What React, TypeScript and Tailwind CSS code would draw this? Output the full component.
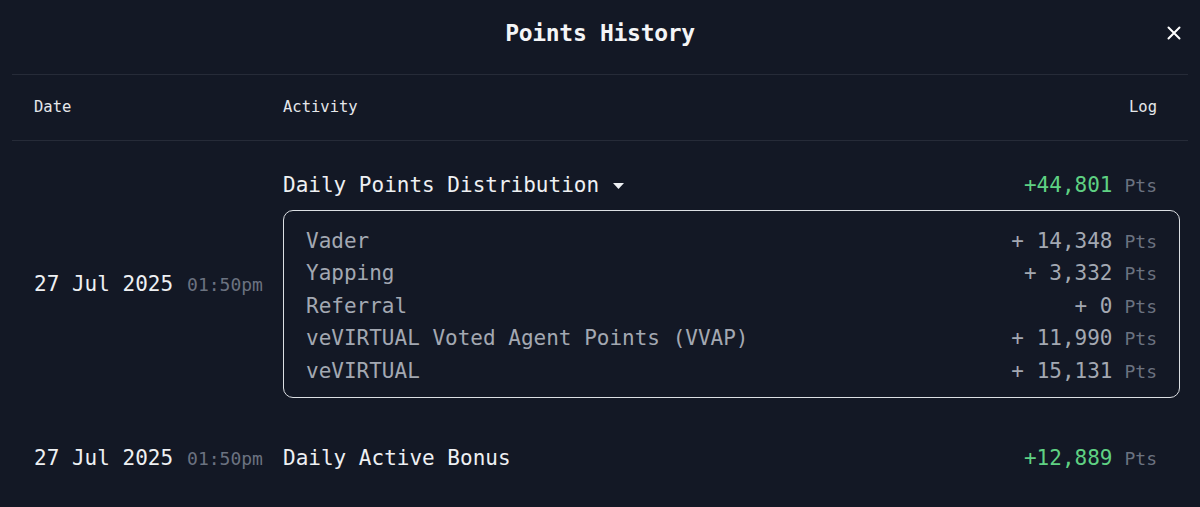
import React from "react";

const breakdown = [
  { label: "Vader", value: "14,348" },
  { label: "Yapping", value: "3,332" },
  { label: "Referral", value: "0" },
  { label: "veVIRTUAL Voted Agent Points (VVAP)", value: "11,990" },
  { label: "veVIRTUAL", value: "15,131" },
];

const DateCell = () => (
  <div className="w-[249px] shrink-0 flex items-baseline gap-[14px] whitespace-nowrap">
    <span className="text-[21px] text-[#eef0f3]">27 Jul 2025</span>
    <span className="text-[18px] text-[#6b7280]">01:50pm</span>
  </div>
);

const Total = ({ value }: { value: string }) => (
  <div className="flex items-baseline gap-[12px] whitespace-nowrap">
    <span className="text-[21px] text-[#5fd183]">{value}</span>
    <span className="text-[18px] text-[#6b7280]">Pts</span>
  </div>
);

const App = () => {
  return (
    <div
      className="w-[1200px] h-[507px] bg-[#131825] text-white overflow-hidden"
      style={{ fontFamily: '"DejaVu Sans Mono", "Liberation Mono", monospace' }}
    >
      <div className="relative h-[74px] flex items-center justify-center pb-[8px]">
        <h2 className="text-[23px] font-bold text-[#f4f5f7] tracking-[-0.3px]">
          Points History
        </h2>
        <button className="absolute right-[19px] top-[26px] text-white">
          <svg width="14" height="14" viewBox="0 0 14 14" fill="none">
            <path
              d="M1.5 1.5L12.5 12.5M12.5 1.5L1.5 12.5"
              stroke="currentColor"
              strokeWidth="2"
              strokeLinecap="round"
            />
          </svg>
        </button>
      </div>

      <div className="mx-[12px]">
        <div className="border-t border-[#262b38] h-[66px] flex items-center pl-[22px] pr-[31px] text-[15.5px] text-[#e5e7eb]">
          <div className="w-[249px] shrink-0">Date</div>
          <div className="flex-1">Activity</div>
          <div>Log</div>
        </div>

        <div className="border-t border-[#262b38] pt-[30px] pl-[22px] pr-[8px]">
          <div className="flex items-center">
            <DateCell />
            <div className="flex-1">
              <div className="flex items-center justify-between pr-[23px] h-[30px]">
                <div className="flex items-center gap-[14px] text-[21px] text-[#eef0f3]">
                  <span>Daily Points Distribution</span>
                  <svg width="11" height="6" viewBox="0 0 11 6">
                    <path d="M0 0H11L5.5 6Z" fill="#eef0f3" />
                  </svg>
                </div>
                <Total value="+44,801" />
              </div>
              <div className="mt-[9px] border-[1.5px] border-[#dcdfe3] rounded-[10px] px-[22px] pt-[14px] pb-[9px] flex flex-col">
                {breakdown.map((item) => (
                  <div
                    key={item.label}
                    className="h-[32.5px] flex items-center justify-between"
                  >
                    <span className="text-[21px] text-[#a3a8b2]">{item.label}</span>
                    <div className="flex items-baseline gap-[12px] whitespace-nowrap">
                      <span className="text-[21px] text-[#a3a8b2]">+ {item.value}</span>
                      <span className="text-[18px] text-[#6b7280]">Pts</span>
                    </div>
                  </div>
                ))}
              </div>
            </div>
          </div>

          <div className="flex items-center h-[40px] mt-[41px]">
            <DateCell />
            <div className="flex-1 flex items-center justify-between pr-[23px]">
              <span className="text-[21px] text-[#eef0f3]">Daily Active Bonus</span>
              <Total value="+12,889" />
            </div>
          </div>
        </div>
      </div>
    </div>
  );
};

export default App;
